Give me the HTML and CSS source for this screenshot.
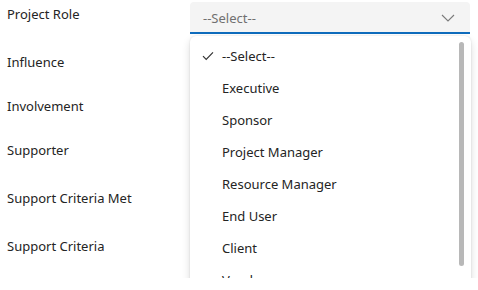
FILE: index.html
```html
<!DOCTYPE html>
<html lang="en">
<head>
    <meta charset="UTF-8">
    <title>Stakeholder</title>
    <link rel="stylesheet" href="styles.css">
</head>
<body>

    <div class="form">
        <div class="row tall">
            <label class="label">Project Role</label>
            <div class="field">
                <div class="select">
                    <span class="select-value">--Select--</span>
                    <svg class="chevron" width="14" height="8" viewBox="0 0 14 8">
                        <path d="M1 1 L7 7 L13 1" fill="none" stroke="#7a7a7a" stroke-width="1.1"/>
                    </svg>
                </div>

                <!-- lista aberta -->
                <div class="dropdown">
                    <div class="option selected">
                        <svg class="check" width="12" height="10" viewBox="0 0 12 10">
                            <path d="M1 5.2 L4.2 8.4 L11 1.4" fill="none" stroke="#333" stroke-width="1.2"/>
                        </svg>
                        --Select--
                    </div>
                    <div class="option">Executive</div>
                    <div class="option">Sponsor</div>
                    <div class="option">Project Manager</div>
                    <div class="option">Resource Manager</div>
                    <div class="option">End User</div>
                    <div class="option">Client</div>
                    <div class="option">Vendor</div>
                    <div class="scrollbar"></div>
                </div>
            </div>
        </div>
        <div class="row"><label class="label">Influence</label></div>
        <div class="row"><label class="label">Involvement</label></div>
        <div class="row tall"><label class="label">Supporter</label></div>
        <div class="row tall"><label class="label">Support Criteria Met</label></div>
        <div class="row"><label class="label">Support Criteria</label></div>
    </div>

</body>
</html>
```

FILE: styles.css
```css
body {
    margin: 0;
    padding: 0;
    background-color: #fff;
    font-family: 'Segoe UI', 'Noto Sans', sans-serif;
    font-size: 13px;
    color: #242424;
    overflow: hidden;
}

.form {
    padding: 2px 0 0 7px;
}

.row {
    display: grid;
    grid-template-columns: 183px 280px;
    height: 44px;
}

.row.tall {
    height: 48px;
}

.label {
    padding-top: 2px;
    line-height: 20px;
}

.field {
    position: relative;
}

.select {
    height: 30px;
    background-color: #f4f4f4;
    border-bottom: 2px solid #0f6cbd;
    border-radius: 4px 4px 0 0;
    display: flex;
    align-items: center;
    justify-content: space-between;
    padding: 0 15px 0 13px;
}

.select-value {
    color: #707070;
    padding-top: 1px;
}

.chevron {
    margin-top: 1px;
}

.dropdown {
    position: absolute;
    top: 34px;
    left: 0;
    width: 281px;
    height: 250px;
    background-color: #fff;
    border-radius: 6px;
    box-shadow: 0 0 2px rgba(0, 0, 0, 0.12), 0 4px 8px rgba(0, 0, 0, 0.14);
    padding-top: 4px;
    box-sizing: border-box;
    overflow: hidden;
    z-index: 1;
}

.option {
    height: 32px;
    line-height: 32px;
    padding-left: 32px;
    position: relative;
}

.check {
    position: absolute;
    left: 12px;
    top: 11px;
}

.scrollbar {
    position: absolute;
    top: 6px;
    right: 7px;
    width: 5px;
    height: 224px;
    border-radius: 3px;
    background-color: #b8b8b8;
}
```
